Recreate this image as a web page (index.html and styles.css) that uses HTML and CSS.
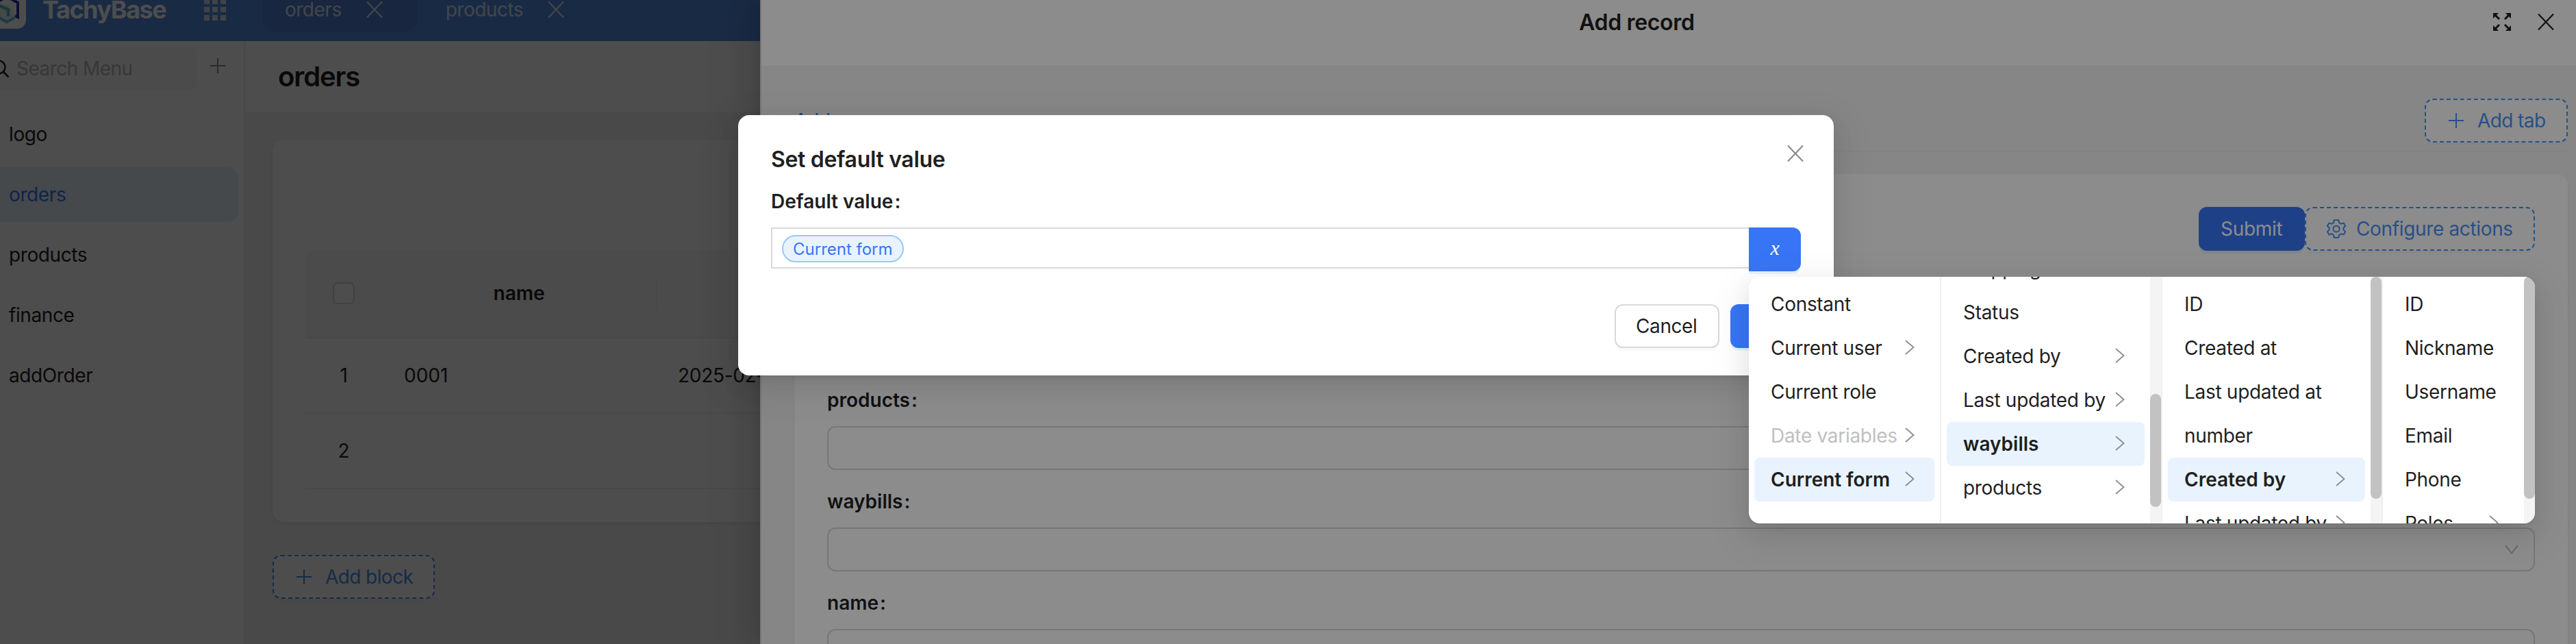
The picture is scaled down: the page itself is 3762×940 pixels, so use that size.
FILE: index.html
```html
<!DOCTYPE html>
<html lang="en">
<head>
<meta charset="utf-8">
<title>TachyBase</title>
<link rel="stylesheet" href="styles.css">
</head>
<body>
<svg width="0" height="0" class="defs">
  <symbol id="plus" viewBox="0 0 22 22"><path d="M11 0v22M0 11h22" stroke="currentColor" stroke-width="2" fill="none"/></symbol>
  <symbol id="close" viewBox="0 0 24 24"><path d="M1 .5l22 23M23 .5l-22 23" stroke="currentColor" stroke-width="2.2" fill="none"/></symbol>
  <symbol id="right" viewBox="0 0 14 22"><path d="M1 1l11.500 10-11.500 10" stroke="currentColor" stroke-width="1.800" fill="none"/></symbol>
  <symbol id="gear" viewBox="0 0 28 28"><path d="M10.800 1.300h6.400l1 3.900 2.600 1.500 3.900-1.100 2.500 4.200-2.700 2.700v3l2.700 2.700-2.500 4.200-3.900-1.100-2.600 1.500-1 3.900h-6.400l-1-3.900-2.600-1.500-3.900 1.100L.9 18.200l2.700-2.700v-3L.9 9.800l2.500-4.200 3.900 1.100 2.600-1.500z" stroke="currentColor" stroke-width="2" stroke-linejoin="round" fill="none"/><circle cx="14" cy="14" r="4.600" stroke="currentColor" stroke-width="2" fill="none"/></symbol>
</svg>

<div class="app">
  <header class="topbar">
    <svg class="logo" viewBox="0 0 56 56">
      <rect width="56" height="56" rx="13" fill="#fff"/>
      <path d="M12 30l16-9 15 17-15 8-16-9z" fill="#d5ecf4" opacity=".6"/>
      <path d="M12 18l16-9 16 9v21l-4-2" fill="none" stroke="#3036b8" stroke-width="4"/>
      <path d="M12 18v19l16 9 11-6" fill="none" stroke="#5fc4dc" stroke-width="4"/>
      <path d="M17 22l13 6v10" fill="none" stroke="#56bcc8" stroke-width="4.500"/>
    </svg>
    <span class="brand">TachyBase</span>
    <span class="grid"><i></i><i></i><i></i><i></i><i></i><i></i><i></i><i></i><i></i></span>
    <div class="tab tab-on"><span>orders</span><svg class="i24"><use href="#close"/></svg></div>
    <div class="tab"><span>products</span><svg class="i24"><use href="#close"/></svg></div>
  </header>
  <div class="body">
    <aside class="side">
      <div class="search-row">
        <div class="search">
          <svg class="lens" viewBox="0 0 28 28"><circle cx="12" cy="12" r="9.500" fill="none" stroke="currentColor" stroke-width="2.400"/><path d="M18.500 18.500l8 8" stroke="currentColor" stroke-width="2.600"/></svg>
          <span>Search Menu</span>
        </div>
        <svg class="i22"><use href="#plus"/></svg>
      </div>
      <nav class="menu">
        <div class="menu-item">logo</div>
        <div class="menu-item menu-on">orders</div>
        <div class="menu-item">products</div>
        <div class="menu-item">finance</div>
        <div class="menu-item">addOrder</div>
      </nav>
    </aside>
    <main class="page">
      <h1 class="page-title">orders</h1>
      <section class="block">
        <div class="row row-head"><div class="c-idx"><span class="check"></span></div><div class="c-name"><span>name</span></div><div class="c-date"></div></div>
        <div class="row"><div class="c-idx">1</div><div class="c-name">0001</div><div class="c-date">2025-02-12</div></div>
        <div class="row"><div class="c-idx">2</div><div class="c-name"></div><div class="c-date"></div></div>
      </section>
      <button class="btn dashed add-block"><svg class="i22"><use href="#plus"/></svg><span class="t5">Add block</span></button>
    </main>
  </div>
</div>

<div class="mask"></div>

<section class="drawer">
  <header class="drawer-head">
    <h2>Add record</h2>
    <div class="drawer-tools">
      <svg class="i26" viewBox="0 0 26 26"><g fill="currentColor" stroke="currentColor" stroke-width="3"><path d="M2 2l7 7M24 2l-7 7M2 24l7-7M24 24l-7-7" fill="none"/><path d="M0 0h8L0 8zM26 0h-8l8 8zM0 26h8l-8-8zM26 26h-8l8-8z" stroke="none"/></g></svg>
      <svg class="i24"><use href="#close"/></svg>
    </div>
  </header>
  <div class="drawer-tabs"><span class="drawer-tab">Add new</span>
    <button class="btn dashed"><svg class="i22"><use href="#plus"/></svg><span class="t5">Add tab</span></button>
  </div>
  <div class="form">
    <div class="form-actions">
      <button class="btn primary">Submit</button>
      <button class="btn dashed conf"><svg class="i28"><use href="#gear"/></svg><span>Configure actions</span></button>
    </div>
    <div class="field"><label>products<b>:</b></label><div class="input"></div></div>
    <div class="field"><label>waybills<b>:</b></label><div class="input"><svg class="down" viewBox="0 0 20 14"><path d="M1 1l9 11.500 9-11.500" fill="none" stroke="currentColor" stroke-width="2"/></svg></div></div>
    <div class="field"><label>name<b>:</b></label><div class="input"></div></div>
  </div>
</section>

<div class="mask"></div>

<section class="modal">
  <svg class="i24 modal-close"><use href="#close"/></svg>
  <h2>Set default value</h2>
  <label>Default value<b>:</b></label>
  <div class="var-row">
    <div class="var-input"><span class="tag">Current form</span></div>
    <button class="var-btn">x</button>
  </div>
  <footer class="modal-foot">
    <button class="btn cancel">Cancel</button>
    <button class="btn primary ok">OK</button>
  </footer>
</section>

<div class="cascader">
  <div class="col col1">
    <div class="opt">Constant</div>
    <div class="opt">Current user<svg class="arr"><use href="#right"/></svg></div>
    <div class="opt">Current role</div>
    <div class="opt"><span class="off">Date variables</span><svg class="arr"><use href="#right"/></svg></div>
    <div class="opt on">Current form<svg class="arr"><use href="#right"/></svg></div>
  </div>
  <div class="col col2">
    <div class="list scrolled">
      <div class="opt">Shipping</div>
      <div class="opt">Status</div>
      <div class="opt">Created by<svg class="arr"><use href="#right"/></svg></div>
      <div class="opt">Last updated by<svg class="arr"><use href="#right"/></svg></div>
      <div class="opt on">waybills<svg class="arr"><use href="#right"/></svg></div>
      <div class="opt">products<svg class="arr"><use href="#right"/></svg></div>
    </div>
    <div class="track"><div class="thumb thumb-low"></div></div>
  </div>
  <div class="col col3">
    <div class="list">
      <div class="opt">ID</div>
      <div class="opt">Created at</div>
      <div class="opt">Last updated at</div>
      <div class="opt">number</div>
      <div class="opt on">Created by<svg class="arr"><use href="#right"/></svg></div>
      <div class="opt">Last updated by<svg class="arr"><use href="#right"/></svg></div>
    </div>
    <div class="track"><div class="thumb"></div></div>
  </div>
  <div class="col col4">
    <div class="list">
      <div class="opt">ID</div>
      <div class="opt">Nickname</div>
      <div class="opt">Username</div>
      <div class="opt">Email</div>
      <div class="opt">Phone</div>
      <div class="opt">Roles<svg class="arr"><use href="#right"/></svg></div>
    </div>
    <div class="track"><div class="thumb"></div></div>
  </div>
</div>
</body>
</html>
```
FILE: styles.css
```css
* { box-sizing: border-box; }
body {
  margin: 0; width: 3762px; height: 940px; overflow: hidden; position: relative;
  font-family: Inter, "Liberation Sans", sans-serif; font-size: 28px; line-height: 44px;
  letter-spacing: -0.3px; color: #1f1f1f; background: #fff;
}
h1, h2 { margin: 0; font-weight: 600; }
button { font: inherit; letter-spacing: inherit; color: inherit; margin: 0; background: #fff; }
svg { flex: none; display: block; }
label { display: flex; font-weight: 600; letter-spacing: 0; height: 44px; }
label b { font-weight: 600; margin-left: 2px; }
.defs { position: absolute; }
.i22 { width: 22px; height: 22px; }
.i24 { width: 24px; height: 24px; }
.i26 { width: 26px; height: 26px; }
.i28 { width: 28px; height: 28px; }

/* application shell */
.app { height: 940px; display: flex; flex-direction: column; overflow: hidden; }
.topbar { height: 92px; margin-top: -32px; flex: none; display: flex; align-items: center; background: #568fe3; color: #fff; }
.logo { width: 56px; height: 56px; margin-left: -18px; }
.brand { font-size: 36px; font-weight: 700; letter-spacing: -1.450px; margin-left: 24px; width: 185px; }
.grid { display: grid; grid-template-columns: 8px 8px 8px; gap: 4px; margin: 0 54px 0 51px; }
.grid i { height: 8px; background: #d3def0; }
.tab { height: 64px; padding: 0 50px 0 32px; display: flex; align-items: center; border-radius: 16px; color: #dfe6f2; }
.tab span { letter-spacing: -0.500px; margin-right: 36px; }
.tab + .tab { padding-left: 42px; }
.tab-on { background: #5081d3; }
.body { flex: 1; display: flex; min-height: 0; }
.side { width: 358px; border-right: 2px solid #f0f0f0; background: #fff; }
.search-row { display: flex; padding-top: 8px; }
.search { width: 288px; height: 64px; display: flex; align-items: center; background: #fafafa; border-radius: 0 12px 12px 0; color: #b8b8b8; letter-spacing: -0.550px; }
.search span { margin-left: 10px; }
.lens { width: 28px; height: 28px; margin-left: -14px; color: #1f1f1f; }
.search-row > svg { margin: 17px 0 0 19px; color: #8c8c8c; }
.menu { display: flex; flex-direction: column; gap: 8px; padding: 24px 8px 0 0; }
.menu-item { height: 80px; line-height: 80px; padding-left: 13px; border-radius: 0 16px 16px 0; letter-spacing: -0.400px; }
.menu-on { background: #e8f3fe; color: #3875f6; }
.page { flex: 1; background: #f5f5f5; }
.page-title { height: 104px; line-height: 104px; padding-left: 48px; background: #fff; font-size: 40px; letter-spacing: -1.100px; }
.block { margin: 40px 0 48px 40px; width: 900px; padding: 160px 0 48px 48px; background: #fff; border-radius: 16px; box-shadow: 0 2px 4px rgba(0,0,0,.03), 0 2px 12px -2px rgba(0,0,0,.03), 0 4px 8px rgba(0,0,0,.03); }
.row { display: flex; align-items: center; height: 110px; border-bottom: 2px solid #f0f0f0; }
.row-head { height: 130px; background: #fafafa; border-top-left-radius: 16px; font-weight: 600; }
.c-idx { width: 112px; display: flex; justify-content: center; }
.c-name { width: 402px; padding-left: 32px; letter-spacing: 0; }
.row-head .c-name { padding: 0; text-align: center; border-right: 2px solid #f0f0f0; }
.c-date { padding-left: 30px; }
.check { width: 32px; height: 32px; border: 2px solid #d9d9d9; border-radius: 8px; background: #fff; }

.btn { height: 64px; border: 2px solid #d9d9d9; border-radius: 12px; padding: 0 30px; display: flex; align-items: center; white-space: nowrap; flex: none; box-shadow: 0 4px 0 rgba(0,0,0,.02); }
.dashed { border: 2px dashed #4893f5; color: #4893f5; padding: 0 30px 0 33px; }
.dashed span { margin-left: 20px; }
.dashed .t5 { letter-spacing: -0.600px; }
.conf { padding: 0 29px 0 30px; }
.conf span { margin-left: 15px; letter-spacing: -0.350px; }
.primary { border-color: #3875f6; background: #3875f6; color: #fff; box-shadow: 0 4px 0 rgba(5,145,255,.1); }
.add-block { margin-left: 40px; width: 237px; }

.mask { position: absolute; inset: 0; background: rgba(0,0,0,.45); }

/* drawer over the page */
.drawer {
  position: absolute; left: 1110px; right: 0; top: 0; bottom: 0; overflow: hidden; background: #f5f5f5; border-left: 2px solid #dcdcdc;
  box-shadow: -12px 0 32px rgba(0,0,0,.08), -6px 0 12px -8px rgba(0,0,0,.12), -18px 0 56px 16px rgba(0,0,0,.05);
}
.drawer-head { height: 130px; margin-top: -32px; background: #fff; border-bottom: 2px solid #f0f0f0; display: flex; align-items: center; justify-content: flex-end; }
.drawer-head h2 { flex: 1; padding: 2px 0 0 1194px; font-size: 32px; letter-spacing: -0.320px; }
.drawer-tools { display: flex; gap: 39px; padding-right: 32px; align-items: center; }
.drawer-tabs { height: 124px; margin: 0 12px 0 48px; padding-top: 46px; border-bottom: 2px solid #eee; display: flex; justify-content: space-between; }
.drawer-tab { line-height: 64px; color: #3875f6; }
.drawer-tabs .btn { width: 209px; }
.form { margin: 32px 12px 0 48px; padding: 48px; height: 800px; background: #fff; border-radius: 16px; box-shadow: 0 2px 4px rgba(0,0,0,.03), 0 4px 8px rgba(0,0,0,.03); }
.form-actions { display: flex; justify-content: flex-end; margin-bottom: 196px; }
.form-actions .primary { width: 155px; }
.form-actions .conf { width: 336px; }
.field { margin-bottom: 24px; }
.input { height: 64px; margin-top: 16px; border: 2px solid #d9d9d9; border-radius: 12px; display: flex; justify-content: flex-end; align-items: center; padding-right: 22px; }
.down { width: 20px; height: 14px; color: #bfbfbf; }

/* modal dialog */
.modal, .cascader { box-shadow: 0 12px 32px rgba(0,0,0,.08), 0 6px 12px -8px rgba(0,0,0,.12), 0 18px 56px 16px rgba(0,0,0,.05); }
.modal { position: absolute; left: 1078px; top: 168px; width: 1600px; height: 380px; padding: 40px 48px; background: #fff; border-radius: 16px; }
.modal h2 { font-size: 32px; line-height: 50px; margin-bottom: 14px; letter-spacing: -0.320px; }
.modal-close { position: absolute; right: 44px; top: 44px; color: #8c8c8c; }
.var-row { display: flex; margin-top: 16px; height: 64px; }
.var-input { flex: 1; height: 60px; border: 2px solid #d9d9d9; border-right: 0; padding: 9px 14px; }
.tag { display: inline-block; height: 40px; line-height: 37px; padding: 0 14px; border: 2px solid #9ac8fb; border-radius: 20px; background: #e8f3fe; color: #3875f6; font-size: 24px; letter-spacing: 0; vertical-align: top; }
.var-btn { width: 76px; padding: 0 0 4px; border: 0; border-radius: 0 12px 12px 0; background: #3875f6; color: #fff; font: italic 30px/60px "Liberation Serif", serif; box-shadow: 0 4px 0 rgba(5,145,255,.1); }
.modal-foot { margin-top: 48px; display: flex; justify-content: flex-end; gap: 16px; }
.cancel { width: 153px; padding-left: 29px; letter-spacing: -0.400px; }
.ok { width: 103px; }

/* variable picker */
.cascader { position: absolute; left: 2554px; top: 404px; width: 1148px; height: 360px; display: flex; background: #fff; border-radius: 16px; overflow: hidden; }
.col { display: flex; border-right: 2px solid #f0f0f0; overflow: hidden; }
.col1 { width: 281px; padding: 8px; flex-direction: column; }
.col2 { width: 323px; }
.col3 { width: 322px; }
.col4 { width: 222px; border-right: 0; }
.list { flex: 1; padding: 8px; }
.scrolled { margin-top: -52px; }
.opt { height: 64px; flex: none; line-height: 64px; padding: 0 29px 0 24px; border-radius: 8px; display: flex; align-items: center; justify-content: space-between; white-space: nowrap; }
.on { background: #e8f3fe; font-weight: 600; letter-spacing: 0; }
.off { color: #bfbfbf; }
.arr { width: 14px; height: 22px; margin: -2px 0 0 -20px; color: #8c8c8c; }
.track { width: 16px; background: #f4f4f4; }
.thumb { width: 16px; height: 324px; border-radius: 8px; background: #c2c2c2; }
.thumb-low { height: 165px; margin-top: 171px; }
```
